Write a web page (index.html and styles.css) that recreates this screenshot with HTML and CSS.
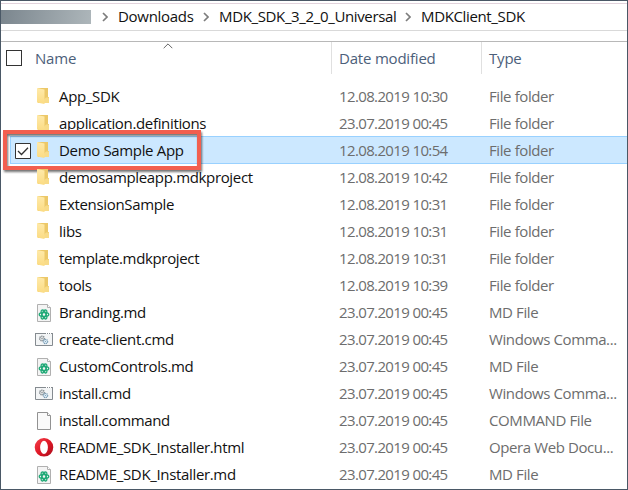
FILE: index.html
```html
<!DOCTYPE html>
<html lang="en">
<head>
<meta charset="utf-8">
<title>MDKClient_SDK</title>
<link rel="stylesheet" href="styles.css">
</head>
<body>
<svg class="defs" width="0" height="0">
  <defs>
    <linearGradient id="flap" x1="0" y1="0" x2="0" y2="1"><stop offset="0" stop-color="#ffeaaa"/><stop offset="1" stop-color="#fbdb82"/></linearGradient>
    <linearGradient id="ring" x1="0" y1="0" x2="1" y2="1"><stop offset="0" stop-color="#f4434e"/><stop offset=".5" stop-color="#e01826"/><stop offset="1" stop-color="#a80d1c"/></linearGradient>
    <symbol id="folder" viewBox="0 0 20 20">
      <path d="M4 1h10v9h1v6H4z" fill="#ecc868"/>
      <path d="M12 10.500h3V16h-5v-3.500z" fill="#f8db88"/>
      <path d="M3 1l7.500 1.500v14.500L3 15.500z" fill="url(#flap)"/>
    </symbol>
    <symbol id="page" viewBox="0 0 20 20">
      <path d="M3.500 1.500h10l3 3v14h-13z" fill="#f9f9f9" stroke="#929292"/>
      <path d="M13.500 1.500v3h3" fill="#fff" stroke="#929292"/>
    </symbol>
    <symbol id="md" viewBox="0 0 20 20">
      <path d="M3.500 1.500h10l3 3v14h-13z" fill="#f4f4f4" stroke="#b0b0b0"/>
      <path d="M13.500 1.500v3h3" fill="#fff" stroke="#b0b0b0"/>
      <g fill="none" stroke="#22aa78" stroke-width="1.300">
        <ellipse cx="10" cy="11.500" rx="2" ry="4.800" transform="rotate(25 10 11.500)"/>
        <ellipse cx="10" cy="11.500" rx="2" ry="4.800" transform="rotate(90 10 11.500)"/>
        <ellipse cx="10" cy="11.500" rx="2" ry="4.800" transform="rotate(155 10 11.500)"/>
      </g>
    </symbol>
    <symbol id="cmd" viewBox="0 0 20 20">
      <path d="M1.500 3.500h17v12h-17z" fill="#f3f5f6" stroke="#858b90"/>
      <path d="M1 3.500h18" stroke="#858b90"/>
      <path d="M12 3.500h1m1 0h1m1 0h1" stroke="#fff"/>
      <circle cx="8" cy="8.500" r="2.300" fill="#e5e8e9" stroke="#858c91" stroke-width="1.500" stroke-dasharray="1.200 .6"/>
      <circle cx="8" cy="8.500" r=".8" fill="#92999d"/>
      <circle cx="11.500" cy="11.500" r="2.100" fill="#e3f1f9" stroke="#779bb3" stroke-width="1.300" stroke-dasharray="1.100 .55"/>
      <circle cx="11.500" cy="11.500" r=".6" fill="#779bb3"/>
    </symbol>
    <symbol id="opera" viewBox="0 0 20 20">
      <path fill="url(#ring)" fill-rule="evenodd" d="M10 0a9.300 9.300 0 1 0 0 18.600a9.300 9.300 0 1 0 0-18.600zM10 2.700a3.900 6.600 0 1 1 0 13.200a3.900 6.600 0 1 1 0-13.200z"/>
    </symbol>
    <symbol id="chev" viewBox="0 0 6 10"><path d="M1 1l4 4-4 4" fill="none" stroke="#7d7d7d" stroke-width="1.700"/></symbol>
  </defs>
</svg>
<div class="window">
  <nav class="path">
    <span class="redacted"></span>
    <svg class="chev"><use href="#chev"/></svg><span class="crumb c1">Downloads</span>
    <svg class="chev"><use href="#chev"/></svg><span class="crumb c2">MDK_SDK_3_2_0_Universal</span>
    <svg class="chev"><use href="#chev"/></svg><span class="crumb c3">MDKClient_SDK</span>
  </nav>
  <div class="gap"></div>
  <div class="head">
    <span class="box"></span><span class="hname">Name</span><span class="hdate">Date modified</span><span class="htype">Type</span>
    <svg class="sort" viewBox="0 0 10 6"><path d="M.7 5.200L5 .9l4.300 4.300" fill="none" stroke="#666"/></svg>
  </div>
  <div class="list">
    <div class="row"><svg class="icon"><use href="#folder"/></svg><span class="name">App_SDK</span><span class="date">12.08.2019 10:30</span><span class="type">File folder</span></div>
    <div class="row"><svg class="icon"><use href="#folder"/></svg><span class="name">application.definitions</span><span class="date">23.07.2019 00:45</span><span class="type">File folder</span></div>
    <div class="row selected"><svg class="tick" viewBox="0 0 16 16"><path d="M.5 .5h15v15H.5z" fill="#fff" stroke="#333"/><path d="M3 8l3.500 3.500L13 4.800" fill="none" stroke="#333" stroke-width="1.300"/></svg><svg class="icon"><use href="#folder"/></svg><span class="name">Demo Sample App</span><span class="date">12.08.2019 10:54</span><span class="type">File folder</span><span class="callout"></span></div>
    <div class="row"><svg class="icon"><use href="#folder"/></svg><span class="name">demosampleapp.mdkproject</span><span class="date">12.08.2019 10:42</span><span class="type">File folder</span></div>
    <div class="row"><svg class="icon"><use href="#folder"/></svg><span class="name">ExtensionSample</span><span class="date">12.08.2019 10:31</span><span class="type">File folder</span></div>
    <div class="row"><svg class="icon"><use href="#folder"/></svg><span class="name">libs</span><span class="date">12.08.2019 10:31</span><span class="type">File folder</span></div>
    <div class="row"><svg class="icon"><use href="#folder"/></svg><span class="name">template.mdkproject</span><span class="date">12.08.2019 10:31</span><span class="type">File folder</span></div>
    <div class="row"><svg class="icon"><use href="#folder"/></svg><span class="name">tools</span><span class="date">12.08.2019 10:39</span><span class="type">File folder</span></div>
    <div class="row"><svg class="icon"><use href="#md"/></svg><span class="name">Branding.md</span><span class="date">23.07.2019 00:45</span><span class="type">MD File</span></div>
    <div class="row"><svg class="icon"><use href="#cmd"/></svg><span class="name">create-client.cmd</span><span class="date">23.07.2019 00:45</span><span class="type">Windows Comma...</span></div>
    <div class="row"><svg class="icon"><use href="#md"/></svg><span class="name">CustomControls.md</span><span class="date">23.07.2019 00:45</span><span class="type">MD File</span></div>
    <div class="row"><svg class="icon"><use href="#cmd"/></svg><span class="name">install.cmd</span><span class="date">23.07.2019 00:45</span><span class="type">Windows Comma...</span></div>
    <div class="row"><svg class="icon"><use href="#page"/></svg><span class="name">install.command</span><span class="date">23.07.2019 00:45</span><span class="type">COMMAND File</span></div>
    <div class="row"><svg class="icon"><use href="#opera"/></svg><span class="name">README_SDK_Installer.html</span><span class="date">23.07.2019 00:45</span><span class="type">Opera Web Docu...</span></div>
    <div class="row"><svg class="icon"><use href="#md"/></svg><span class="name">README_SDK_Installer.md</span><span class="date">23.07.2019 00:45</span><span class="type">MD File</span></div>
  </div>
</div>
</body>
</html>
```
FILE: styles.css
```css
* { box-sizing: border-box; }
body { margin: 0; background: #fff; font: 15px/26px "Open Sans", "Noto Sans", sans-serif; color: #111; }
.defs { position: absolute; }
.window { width: 628px; height: 490px; border: 1px solid #4a5866; overflow: hidden; }
.path { display: flex; align-items: center; height: 28px; margin-top: 2px; border-top: 1px solid #e2d3dc; border-bottom: 1px solid #d9d9d9; white-space: nowrap; }
.redacted { width: 90px; height: 14px; margin-right: 11px; background: linear-gradient(100deg, #7b868e, #adb6ba); }
.chev { width: 6px; height: 10px; flex: none; }
.crumb { margin-left: 10px; padding-bottom: 2px; line-height: 24px; letter-spacing: -.36px; }
.c1 { width: 85px; letter-spacing: -.3px; }
.c2 { width: 186px; }
.gap { height: 10px; }
.head { position: relative; display: grid; grid-template-columns: 34px 296px 150px 1fr; align-items: center; height: 42px; border-top: 1px solid #b8b8b8; color: #4c607a; }
.head span { letter-spacing: -.2px; }
.head .box { width: 16px; height: 16px; margin: -9px 0 0 5px; border: 1px solid #333; }
.hname, .hdate, .htype { height: 32px; align-self: start; line-height: 32px; }
.hdate, .htype { border-left: 1px solid #e0e0e0; padding-left: 7px; }
.sort { position: absolute; left: 162px; top: 1px; width: 10px; height: 6px; }
.row { position: relative; display: grid; grid-template-columns: 34px 24px 280px 150px 1fr; align-items: center; height: 27px; white-space: nowrap; }
.icon { grid-column: 1 / 3; width: 20px; height: 20px; margin-left: 33px; }
.name, .date, .type { padding-bottom: 2px; line-height: 24px; }
.name { grid-column: 3; letter-spacing: -.34px; }
.date { letter-spacing: -.63px; color: #6d6d6d; }
.type { letter-spacing: -.4px; color: #6d6d6d; }
.row > * { grid-row: 1; }
.selected::before { content: ""; position: absolute; z-index: -1; inset: -1px 0 0 9px; background: #cce8ff; border: 1px solid #99d1ff; border-right: 0; }
.tick { grid-column: 1; width: 16px; height: 16px; margin-left: 14px; }
.callout { position: absolute; left: 2px; top: -7px; width: 198px; height: 40px; border: 4px solid #f25f4f; filter: drop-shadow(1px 2px 1px rgba(0, 0, 0, .55)); }
```
